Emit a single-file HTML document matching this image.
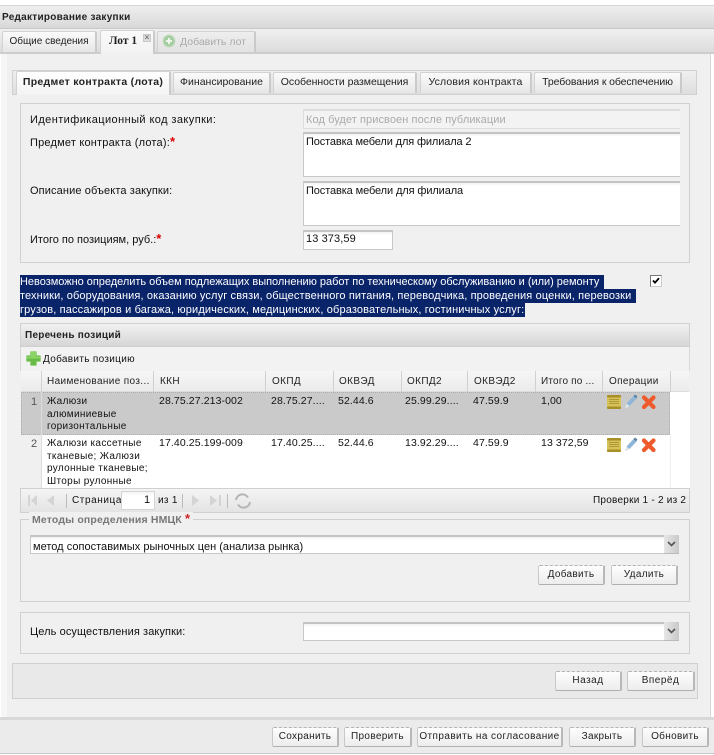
<!DOCTYPE html>
<html><head><meta charset="utf-8"><style>
html,body{margin:0;padding:0;background:#fff}
#p{position:relative;width:714px;height:755px;overflow:hidden;background:#fff;font:11px "Liberation Sans",sans-serif;color:#111}
#p div,#p span.a,#p svg{position:absolute}
.t{white-space:nowrap;line-height:14px}
.g{font-size:10px;letter-spacing:.33px;color:#111;white-space:nowrap;line-height:13px}
.h{font-size:10px;letter-spacing:.36px;color:#222;white-space:nowrap;line-height:13px}
.box{border:1px solid #d0d0d0;box-sizing:border-box}
.inp{background:linear-gradient(#f2f2f2,#fff 3px);border:1px solid #c8c8c8;border-top:2px solid #c4c4c4;box-sizing:border-box;border-right:0}
.tab{background:linear-gradient(#fbfbfb,#e6e6e6);border:1px solid #d2d2d2;border-bottom:0;box-sizing:border-box;text-align:center;white-space:nowrap;color:#222;line-height:20px;border-radius:2px 2px 0 0;border-right:2px solid #cacaca}
.btn{background:linear-gradient(#fdfdfd,#ededed);border:1px solid #c8c8c8;border-right:2px solid #b8b8b8;border-top:1px dashed #b4b4b4;border-bottom:1px solid #b0b0b0;box-sizing:border-box;text-align:center;font-size:10px;letter-spacing:.32px;line-height:17px;color:#222;border-radius:2px;white-space:nowrap}
.sel{background:#0a246a;color:#fff;height:14px;line-height:14px;white-space:nowrap;overflow:hidden;left:20px}
.sep{width:1px;background:#d0d0d0;top:371px;height:21px}
.n{font-size:10.5px;letter-spacing:.1px;color:#111;white-space:nowrap;line-height:13px}
.r{color:#d00;font-weight:bold}
</style></head><body><div id="p">
<div style="left:0;top:5px;width:714px;height:1px;background:#d6d6d6"></div>
<div style="left:0;top:6px;width:714px;height:23px;background:linear-gradient(#efefef,#d8d8d8);border-bottom:1px solid #c9c9c9;box-sizing:border-box"></div>
<div class="t" style="left:2px;top:11px;font-weight:bold;font-size:10px;letter-spacing:.28px;color:#222">Редактирование закупки</div>
<div style="left:0;top:29px;width:714px;height:23px;background:linear-gradient(#f0f0f0,#dcdcdc)"></div>
<div style="left:0;top:52px;width:714px;height:2px;background:#cdcdcd"></div>

<div class="tab" style="left:2px;top:31px;width:95px;height:21px;line-height:20px;font-size:10px">Общие сведения</div>
<div class="tab" style="left:100px;top:30px;width:55px;height:24px;background:linear-gradient(#fafafa,#f2f2f2);text-align:left;border-bottom:0;padding-left:8px;line-height:21px;font-weight:bold;font-family:'Liberation Serif',serif;font-size:11.5px;color:#222">Лот 1</div>
<div style="left:143px;top:34px;width:8px;height:8px;background:#ddd;border:1px solid #c8c8c8;box-sizing:border-box;color:#777;font-size:8px;line-height:6px;text-align:center;font-weight:bold">×</div>
<div class="tab" style="left:157px;top:31px;width:99px;height:21px;background:linear-gradient(#eee,#e2e2e2);color:#aaa;text-align:left;padding-left:22px;line-height:20px;font-size:10.5px">Добавить лот</div>
<svg style="left:162px;top:34px" width="14" height="14" viewBox="0 0 14 14"><circle cx="7" cy="7" r="6" fill="#a5cfa0" stroke="#c9dcc6"/><path d="M7 4v6M4 7h6" stroke="#eef6ec" stroke-width="2"/></svg>

<div style="left:0;top:54px;width:714px;height:663px;background:#f0f0f0"></div>
<div style="left:0;top:54px;width:1px;height:663px;background:#fff"></div>
<div style="left:1px;top:54px;width:6px;height:663px;background:#f6f6f6"></div>
<div style="left:711px;top:54px;width:3px;height:663px;background:#fff"></div>
<div style="left:710px;top:54px;width:1px;height:663px;background:#d8d8d8"></div>

<div style="left:12px;top:70px;width:685px;height:25px;background:linear-gradient(#efefef,#dedede);border:1px solid #d0d0d0;box-sizing:border-box"></div>
<div class="tab" style="left:16px;top:71px;width:155px;height:24px;background:linear-gradient(#fff,#f3f3f3);font-weight:bold;font-size:10.5px;line-height:20px;letter-spacing:.3px;color:#222">Предмет контракта (лота)</div>
<div class="tab" style="left:173px;top:72px;width:98px;height:21px;font-size:10.5px;line-height:19px">Финансирование</div>
<div class="tab" style="left:273px;top:72px;width:144px;height:21px;font-size:10.5px;line-height:19px;letter-spacing:-.05px">Особенности размещения</div>
<div class="tab" style="left:420px;top:72px;width:112px;height:21px;font-size:10.5px;line-height:19px;letter-spacing:.15px">Условия контракта</div>
<div class="tab" style="left:534px;top:72px;width:148px;height:21px;font-size:10.5px;line-height:19px;letter-spacing:-.1px">Требования к обеспечению</div>

<div class="box" style="left:20px;top:103px;width:670px;height:160px"></div>
<div class="t" style="left:30px;top:113px;letter-spacing:.42px">Идентификационный код закупки:</div>
<div class="inp" style="left:303px;top:109px;width:377px;height:20px;background:#f3f3f3;border-color:#ddd"></div>
<div class="t" style="left:306px;top:113px;color:#aaa;letter-spacing:.08px">Код будет присвоен после публикации</div>
<div class="t" style="left:30px;top:135px;letter-spacing:.2px">Предмет контракта (лота):<span class="r" style="font-size:13px">*</span></div>
<div class="inp" style="left:303px;top:132px;width:377px;height:45px"></div>
<div class="t" style="left:306px;top:135px;letter-spacing:-.13px">Поставка мебели для филиала 2</div>
<div class="t" style="left:30px;top:184px;letter-spacing:.12px">Описание объекта закупки:</div>
<div class="inp" style="left:303px;top:181px;width:377px;height:45px"></div>
<div class="t" style="left:306px;top:184px;letter-spacing:-.11px">Поставка мебели для филиала</div>
<div class="t" style="left:30px;top:232px">Итого по позициям, руб.:<span class="r" style="font-size:13px">*</span></div>
<div class="inp" style="left:303px;top:230px;width:90px;height:20px;border-right:1px solid #c8c8c8"></div>
<div class="t" style="left:306px;top:232px;letter-spacing:.1px">13 373,59</div>

<div class="sel" style="top:275px;width:584px;letter-spacing:-.02px">Невозможно определить объем подлежащих выполнению работ по техническому обслуживанию и (или) ремонту</div>
<div class="sel" style="top:289px;width:616px;letter-spacing:.13px">техники, оборудования, оказанию услуг связи, общественного питания, переводчика, проведения оценки, перевозки</div>
<div class="sel" style="top:303px;width:505px;height:14px;letter-spacing:.145px">грузов, пассажиров и багажа, юридических, медицинских, образовательных, гостиничных услуг:</div>
<div style="left:650px;top:275px;width:12px;height:12px;background:#fff;border:1px solid #777;border-right-color:#ccc;border-bottom-color:#ccc;box-sizing:border-box"></div>
<svg style="left:650px;top:275px" width="12" height="12" viewBox="0 0 12 12"><path d="M3 5.500l2 2.200L9 3.200" fill="none" stroke="#000" stroke-width="1.800"/></svg>

<div style="left:20px;top:323px;width:670px;height:24px;background:linear-gradient(#f1f1f1,#d6d6d6);border:1px solid #d0d0d0;box-sizing:border-box"></div>
<div class="t" style="left:25px;top:329px;font-weight:bold;font-size:10px;letter-spacing:.25px;color:#222">Перечень позиций</div>
<div style="left:20px;top:347px;width:670px;height:24px;background:#f2f2f2;border-left:1px solid #d8d8d8;border-right:1px solid #d8d8d8;box-sizing:border-box"></div>
<svg style="left:26px;top:351px" width="15" height="15" viewBox="0 0 15 15"><path d="M4.500 1q0-.5.500-.5h5q.5 0 .5.500v3.500h3.500q.5 0 .5.500v5q0 .5-.5.500H10.500v3.500q0 .5-.5.500H5q-.5 0-.5-.500v-3.500H1q-.5 0-.5-.500V5q0-.5.500-.5h3.500z" fill="#69bb47" stroke="#95cf7c" stroke-width=".6"/><path d="M5 1h5v4.500h4v2H1v-2h4z" fill="#8bd567"/></svg>
<div class="g" style="left:43px;top:353px;letter-spacing:.32px">Добавить позицию</div>

<div style="left:21px;top:371px;width:668px;height:21px;background:linear-gradient(#f6f6f6,#ebebeb);border-bottom:1px solid #ddd;box-sizing:border-box"></div>
<div class="sep" style="left:41px"></div><div class="sep" style="left:153px"></div><div class="sep" style="left:265px"></div><div class="sep" style="left:333px"></div><div class="sep" style="left:401px"></div><div class="sep" style="left:467px"></div><div class="sep" style="left:535px"></div><div class="sep" style="left:602px"></div><div class="sep" style="left:670px"></div>
<div class="h" style="left:47px;top:375px">Наименование поз...</div>
<div class="h" style="left:160px;top:375px">ККН</div>
<div class="h" style="left:272px;top:375px">ОКПД</div>
<div class="h" style="left:339px;top:375px">ОКВЭД</div>
<div class="h" style="left:407px;top:375px">ОКПД2</div>
<div class="h" style="left:474px;top:375px">ОКВЭД2</div>
<div class="h" style="left:541px;top:375px;letter-spacing:.2px">Итого по ...</div>
<div class="h" style="left:609px;top:375px">Операции</div>

<div style="left:21px;top:392px;width:669px;height:96px;background:#fff"></div>
<div style="left:21px;top:392px;width:649px;height:43px;background:#cacaca;border:1px dotted #adadad;box-sizing:border-box"></div>
<div style="left:21px;top:435px;width:20px;height:53px;background:#f0f0f0"></div>
<div style="left:41px;top:392px;width:1px;height:96px;background:#ddd"></div>
<div style="left:670px;top:435px;width:1px;height:53px;background:#eee"></div>

<div class="g" style="left:31px;top:396px;color:#555;letter-spacing:0;font-size:11px">1</div>
<div class="g" style="left:47px;top:396px;line-height:12.500px">Жалюзи<br>алюминиевые<br>горизонтальные</div>
<div class="n" style="left:159px;top:395px">28.75.27.213-002</div>
<div class="n" style="left:271px;top:395px">28.75.27....</div>
<div class="n" style="left:338px;top:395px">52.44.6</div>
<div class="n" style="left:405px;top:395px">25.99.29....</div>
<div class="n" style="left:473px;top:395px">47.59.9</div>
<div class="n" style="left:541px;top:395px">1,00</div>

<div class="g" style="left:31px;top:438px;color:#555;letter-spacing:0;font-size:11px">2</div>
<div class="g" style="left:47px;top:438px;line-height:12.500px">Жалюзи кассетные<br>тканевые; Жалюзи<br>рулонные тканевые;<br>Шторы рулонные</div>
<div class="n" style="left:159px;top:437px">17.40.25.199-009</div>
<div class="n" style="left:271px;top:437px">17.40.25....</div>
<div class="n" style="left:338px;top:437px">52.44.6</div>
<div class="n" style="left:405px;top:437px">13.92.29....</div>
<div class="n" style="left:473px;top:437px">47.59.9</div>
<div class="n" style="left:541px;top:437px">13 372,59</div>

<svg style="left:606px;top:394px" width="52" height="16" viewBox="0 0 52 16"><rect x="1" y="1" width="14" height="14" rx="1.500" fill="#d8c25a"/><rect x="1" y="1" width="14" height="2.500" rx="1" fill="#a88f26"/><rect x="1" y="12.500" width="14" height="2.500" rx="1" fill="#a88f26"/><path d="M3 5.500h10M3 7.500h10M3 9.500h10" stroke="#a08a2a" stroke-width=".8"/><path d="M19 14l2-5 7-7.500 3 2.500-7 7.500z" fill="#8fb6d8"/><path d="M27.500 2l1.500-1.500 2.500 2-1.500 1.700z" fill="#5a7f9f"/><path d="M19 14.500l1.500-5 3 2.500z" fill="#dfe6ea"/><path d="M38 3.500l9.500 9.500M47.500 3.500L38 13" stroke="#ee5a2c" stroke-width="4.200" stroke-linecap="round"/></svg>
<svg style="left:606px;top:437px" width="52" height="16" viewBox="0 0 52 16"><rect x="1" y="1" width="14" height="14" rx="1.500" fill="#d8c25a"/><rect x="1" y="1" width="14" height="2.500" rx="1" fill="#a88f26"/><rect x="1" y="12.500" width="14" height="2.500" rx="1" fill="#a88f26"/><path d="M3 5.500h10M3 7.500h10M3 9.500h10" stroke="#a08a2a" stroke-width=".8"/><path d="M19 14l2-5 7-7.500 3 2.500-7 7.500z" fill="#8fb6d8"/><path d="M27.500 2l1.500-1.500 2.500 2-1.500 1.700z" fill="#5a7f9f"/><path d="M19 14.500l1.500-5 3 2.500z" fill="#dfe6ea"/><path d="M38 3.500l9.500 9.500M47.500 3.500L38 13" stroke="#ee5a2c" stroke-width="4.200" stroke-linecap="round"/></svg>

<div style="left:20px;top:488px;width:670px;height:25px;background:linear-gradient(#f4f4f4,#e4e4e4);border:1px solid #d0d0d0;box-sizing:border-box"></div>
<svg style="left:26px;top:492px" width="230" height="18" viewBox="0 0 230 18" fill="#d4d4d4"><path d="M2 3h2v11H2zM11 3v11L5 8.500z"/><path d="M28 3v11l-7-5.500z"/><path d="M40.500 2v14M156.500 2v14M201.500 2v14" stroke="#bbb" fill="none"/><path d="M166 3v11l7-5.500z"/><path d="M184 3v11l7-5.500zM193 3h2v11h-2z"/><path d="M210 8a6.500 6.500 0 0 1 12-2.500M224 10a6.500 6.500 0 0 1-12 2.500" fill="none" stroke="#b4b4b4" stroke-width="2"/></svg>
<div class="g" style="left:72px;top:494px;letter-spacing:.58px">Страница</div>
<div class="inp" style="left:121px;top:491px;width:34px;height:19px;border:1px solid #d4d4d4;background:linear-gradient(#f4f4f4,#fff 4px)"></div>
<div class="g" style="left:144px;top:494px;letter-spacing:0;font-size:11px">1</div>
<div class="g" style="left:158px;top:494px;letter-spacing:.3px">из 1</div>
<div class="g" style="left:593px;top:494px;letter-spacing:.24px">Проверки 1 - 2 из 2</div>

<div class="box" style="left:20px;top:519px;width:670px;height:83px"></div>
<div class="t" style="left:29px;top:512px;background:#f0f0f0;padding:0 3px;font-weight:bold;font-size:10.500px;letter-spacing:.15px;color:#777">Методы определения НМЦК <span class="r" style="font-size:13px;color:#c22">*</span></div>
<div class="inp" style="left:30px;top:535px;width:634px;height:19px"></div>
<div class="t" style="left:33px;top:540px;font-size:11px;letter-spacing:.02px">метод сопоставимых рыночных цен (анализа рынка)</div>
<div style="left:664px;top:535px;width:15px;height:19px;background:linear-gradient(90deg,#e6e6e6,#c9c9c9);border-bottom:1px solid #bbb;box-sizing:border-box"></div>
<svg style="left:667px;top:541px" width="9" height="6" viewBox="0 0 9 6"><path d="M1 1l3.500 3.500L8 1" fill="none" stroke="#555" stroke-width="1.600"/></svg>
<div class="btn" style="left:538px;top:565px;width:67px;height:20px">Добавить</div>
<div class="btn" style="left:611px;top:565px;width:67px;height:20px">Удалить</div>

<div class="box" style="left:20px;top:612px;width:670px;height:42px"></div>
<div class="t" style="left:30px;top:625px;letter-spacing:.1px">Цель осуществления закупки:</div>
<div class="inp" style="left:303px;top:622px;width:361px;height:19px"></div>
<div style="left:664px;top:622px;width:15px;height:19px;background:linear-gradient(90deg,#e6e6e6,#c9c9c9);border-bottom:1px solid #bbb;box-sizing:border-box"></div>
<svg style="left:667px;top:628px" width="9" height="6" viewBox="0 0 9 6"><path d="M1 1l3.500 3.500L8 1" fill="none" stroke="#555" stroke-width="1.600"/></svg>

<div class="box" style="left:12px;top:663px;width:686px;height:36px;background:#e9e9e9"></div>
<div class="btn" style="left:555px;top:671px;width:67px;height:20px;letter-spacing:.5px">Назад</div>
<div class="btn" style="left:627px;top:671px;width:68px;height:20px;letter-spacing:.5px">Вперёд</div>

<div style="left:0;top:717px;width:714px;height:3px;background:#d8d8d8"></div>
<div style="left:0;top:720px;width:714px;height:33px;background:#ebebeb"></div>
<div style="left:0;top:753px;width:714px;height:1px;background:#c8c8c8"></div>
<div class="btn" style="left:272px;top:727px;width:67px;height:20px">Сохранить</div>
<div class="btn" style="left:344px;top:727px;width:68px;height:20px">Проверить</div>
<div class="btn" style="left:417px;top:727px;width:146px;height:20px;letter-spacing:.42px">Отправить на согласование</div>
<div class="btn" style="left:569px;top:727px;width:67px;height:20px">Закрыть</div>
<div class="btn" style="left:642px;top:727px;width:67px;height:20px">Обновить</div>
</div></body></html>
